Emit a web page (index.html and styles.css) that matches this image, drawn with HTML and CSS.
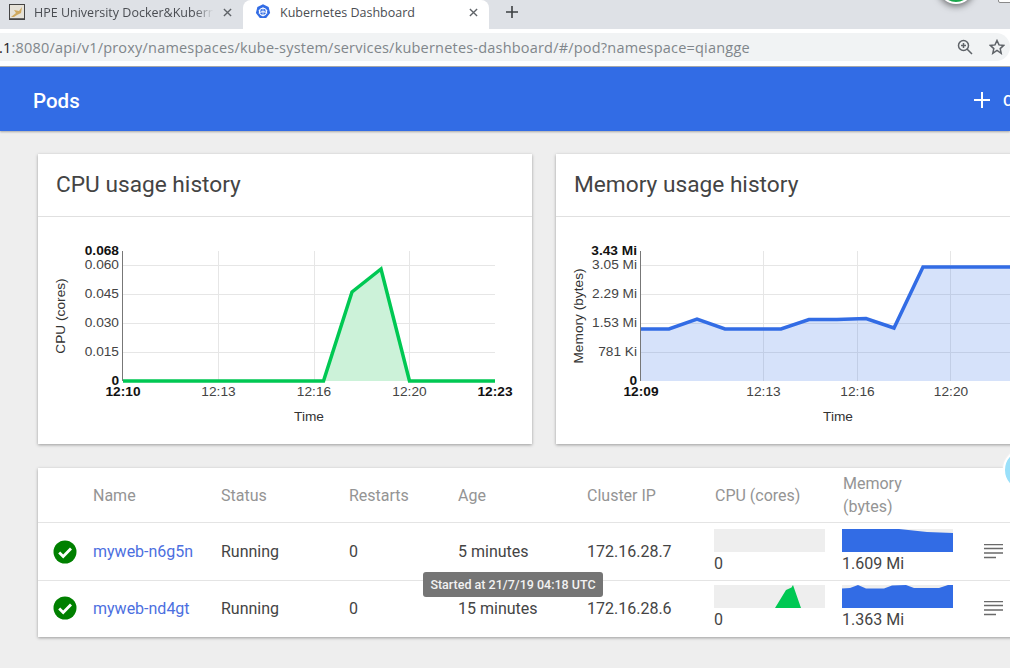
FILE: index.html
```html
<!DOCTYPE html>
<html lang="en">
<head>
<meta charset="utf-8">
<title>Kubernetes Dashboard</title>
<link rel="stylesheet" href="styles.css">
</head>
<body>
<div class="tabstrip">
  <div class="tab">
    <svg class="favicon" viewBox="0 0 16 16"><rect x="0.5" y="0.5" width="15" height="15" fill="#e6e2d8" stroke="#444"/><path d="M2 13 L7 9 L5 6 L10 7 L13 3 L12 9 L8 11 L5 13Z" fill="#cfa95e"/><path d="M1 14h14v1H1z" fill="#666"/></svg>
    <span class="tab-title">HPE University Docker&amp;Kuberne</span>
    <svg class="tab-x" viewBox="0 0 10 10"><path d="M1 1l8 8M9 1l-8 8"/></svg>
  </div>
  <div class="tab tab-active">
    <svg class="favicon" viewBox="0 0 16 16"><path d="M8 0.300l5.600 2.700 1.500 6-3.900 4.900H4.800L0.900 9l1.500-6z" fill="#326ce5"/><circle cx="8" cy="7.800" r="3.600" fill="none" stroke="#fff" stroke-width="1.100"/><path d="M8 3v9.600M3.600 6.500l8.800 2.600M12.400 6.500L3.600 9.100" stroke="#fff" stroke-width="0.700"/></svg>
    <span class="tab-title">Kubernetes Dashboard</span>
    <svg class="tab-x" viewBox="0 0 10 10"><path d="M1 1l8 8M9 1l-8 8"/></svg>
  </div>
  <svg class="tab-plus" viewBox="0 0 12 12"><path d="M6 0v12M0 6h12"/></svg>
</div>
<div class="toolbar">
  <div class="omnibox">
    <span class="url"><b class="url-host">.1</b>:8080/api/v1/proxy/namespaces/kube-system/services/kubernetes-dashboard/#/pod?namespace=qiangge</span>
    <svg class="zoom-icon" viewBox="0 0 16 16"><circle cx="6.500" cy="6.500" r="5" /><path d="M10 10l5 5M4 6.500h5M6.500 4v5"/></svg>
    <svg class="star-icon" viewBox="0 0 16 16"><path d="M8 1.500l2 4.400 4.700.5-3.500 3.200 1 4.700L8 11.400l-4.200 2.900 1-4.700L1.300 6.400l4.700-.5z"/></svg>
  </div>
</div>
<header class="appbar">
  <h1 class="appbar-title">Pods</h1>
  <div class="appbar-action">
    <svg class="plus-icon" viewBox="0 0 16 16"><path d="M8 0v16M0 8h16"/></svg>
    <span class="action-text">CREATE</span>
  </div>
</header>
<main class="content">
  <section class="charts">
    <article class="card">
      <h2 class="card-title">CPU usage history</h2>
      <svg class="chart" viewBox="38 217 494 227">
        <g class="grid">
          <path d="M123 265.500H495M123 294.500H495M123 323.500H495M123 352.500H495M218.500 251V381M314.500 251V381M409.500 251V381"/>
        </g>
        <path class="area-green" d="M123 381H323.500L352 292L381 269L409.500 381Z"/>
        <path class="axis" d="M122.500 251V381"/>
        <polyline class="line-green" points="123,381 323.500,381 352,292 381,269 409.500,381 495,381"/>
        <g class="tick-y">
          <text class="strong" x="119" y="255">0.068</text>
          <text x="119" y="269">0.060</text>
          <text x="119" y="298">0.045</text>
          <text x="119" y="327">0.030</text>
          <text x="119" y="356">0.015</text>
          <text class="strong" x="119" y="385">0</text>
        </g>
        <g class="tick-x">
          <text class="strong" x="123" y="396">12:10</text>
          <text x="218.500" y="396">12:13</text>
          <text x="314" y="396">12:16</text>
          <text x="409.500" y="396">12:20</text>
          <text class="strong" x="495" y="396">12:23</text>
        </g>
        <text class="axis-label" x="309" y="421">Time</text>
        <text class="axis-label" transform="translate(65 316) rotate(-90)">CPU (cores)</text>
      </svg>
    </article>
    <article class="card">
      <h2 class="card-title">Memory usage history</h2>
      <svg class="chart" viewBox="556 217 494 227">
        <g class="grid">
          <path d="M641 265.500H1050M641 294.500H1050M641 323.500H1050M641 352.500H1050M763.500 251V381M857.500 251V381M950.500 251V381"/>
        </g>
        <path class="area-blue" d="M641 381V329H669L697 319L725 329H781L809 319.500H837L866 318.500L894 328L923 267H1050V381Z"/>
        <path class="axis" d="M640.500 251V381"/>
        <polyline class="line-blue" points="641,329 669,329 697,319 725,329 781,329 809,319.500 837,319.500 866,318.500 894,328 923,267 1050,267"/>
        <g class="tick-y">
          <text class="strong" x="637" y="255">3.43 Mi</text>
          <text x="637" y="269">3.05 Mi</text>
          <text x="637" y="298">2.29 Mi</text>
          <text x="637" y="327">1.53 Mi</text>
          <text x="637" y="356">781 Ki</text>
          <text class="strong" x="637" y="385">0</text>
        </g>
        <g class="tick-x">
          <text class="strong" x="641" y="396">12:09</text>
          <text x="763.500" y="396">12:13</text>
          <text x="857.500" y="396">12:16</text>
          <text x="951" y="396">12:20</text>
        </g>
        <text class="axis-label" x="838" y="421">Time</text>
        <text class="axis-label" transform="translate(583 316) rotate(-90)">Memory (bytes)</text>
      </svg>
    </article>
  </section>
  <section class="card table-card">
    <div class="row row-head">
      <span></span>
      <span>Name</span>
      <span>Status</span>
      <span>Restarts</span>
      <span>Age</span>
      <span>Cluster IP</span>
      <span>CPU (cores)</span>
      <span class="wrap">Memory (bytes)</span>
      <span></span>
    </div>
    <div class="row row-first">
      <svg class="check" viewBox="0 0 24 24"><circle cx="12" cy="12" r="11.500"/><path d="M6.200 12.500l4 4 7.800-8"/></svg>
      <a class="pod-link" href="#">myweb-n6g5n</a>
      <span>Running</span>
      <span>0</span>
      <span>5 minutes</span>
      <span>172.16.28.7</span>
      <div class="metric">
        <svg class="spark" viewBox="0 0 111 23" preserveAspectRatio="none"></svg>
        <span>0</span>
      </div>
      <div class="metric">
        <svg class="spark" viewBox="0 0 111 23" preserveAspectRatio="none"><path class="spark-blue" d="M0 0H57L85 3L111 4V23H0Z"/></svg>
        <span>1.609 Mi</span>
      </div>
      <svg class="menu" viewBox="0 0 19 15"><path d="M0 .5h19M0 4.500h19M0 9h19M0 13.500h12"/></svg>
    </div>
    <div class="row row-last">
      <svg class="check" viewBox="0 0 24 24"><circle cx="12" cy="12" r="11.500"/><path d="M6.200 12.500l4 4 7.800-8"/></svg>
      <a class="pod-link" href="#">myweb-nd4gt</a>
      <span>Running</span>
      <span>0</span>
      <span>15 minutes</span>
      <span>172.16.28.6</span>
      <div class="metric">
        <svg class="spark" viewBox="0 0 111 23" preserveAspectRatio="none"><path class="spark-green" d="M61 23L72 5L77.500 2.500L79 0L87 23Z"/></svg>
        <span>0</span>
      </div>
      <div class="metric">
        <svg class="spark" viewBox="0 0 111 23" preserveAspectRatio="none"><path class="spark-blue" d="M0 3.500L8 3L16 0L24 3.500H42L50 .5L64 0L72 3H97L106 0H111V23H0Z"/></svg>
        <span>1.363 Mi</span>
      </div>
      <svg class="menu" viewBox="0 0 19 15"><path d="M0 .5h19M0 4.500h19M0 9h19M0 13.500h12"/></svg>
    </div>
  </section>
</main>
<div class="tooltip">Started at 21/7/19 04:18 UTC</div>
<div class="float-green"></div>
<div class="float-box"></div>
<div class="float-blue"></div>
</body>
</html>
```
FILE: styles.css
```css
* { box-sizing: border-box; }
html, body { margin: 0; padding: 0; width: 1010px; height: 668px; overflow: hidden; }
body { position: relative; background: #eeeeee; font-family: Roboto, "Liberation Sans", sans-serif; color: #212121; }

.tabstrip { height: 29px; background: #dee1e6; display: flex; align-items: flex-start; }
.tab { width: 243px; height: 29px; display: flex; align-items: center; padding: 0 8px 5px 9px; }
.tab-active { width: 246px; background: #fff; border-radius: 8px 8px 0 0; padding: 0 8px 5px 12px; }
.favicon { width: 16px; height: 16px; flex: none; }
.tab-title { flex: 1; margin: 0 6px 0 9px; font: 12.500px "Open Sans", sans-serif; color: #4a4d52; white-space: nowrap; overflow: hidden; -webkit-mask-image: linear-gradient(to right, #000 88%, transparent 98%); mask-image: linear-gradient(to right, #000 88%, transparent 98%); }
.tab-active .tab-title { -webkit-mask-image: none; mask-image: none; }
.tab-x { width: 9px; height: 9px; fill: none; stroke: #5f6368; stroke-width: 1.500; flex: none; margin-right: 3px; }
.tab-plus { width: 12px; height: 12px; margin: 6px 0 0 17px; fill: none; stroke: #3c4043; stroke-width: 1.600; flex: none; }

.toolbar { height: 38px; background: #fff; padding: 4px 0 5px; border-bottom: 1px solid #a9abae; }
.omnibox { height: 28px; background: #f1f3f4; border-radius: 0 14px 14px 0; display: flex; align-items: center; padding-right: 5px; overflow: hidden; }
.url { flex: 1; margin-left: -1px; font: 14.500px "Open Sans", sans-serif; letter-spacing: 0.2px; color: #80868b; white-space: nowrap; overflow: hidden; }
.url-host { font-weight: 400; color: #202124; }
.zoom-icon, .star-icon { width: 16px; height: 16px; fill: none; stroke: #5f6368; stroke-width: 1.500; flex: none; }
.star-icon { margin-left: 16px; }

.appbar { height: 64px; background: #326ce5; display: flex; align-items: center; justify-content: space-between; padding: 4px 0 0 33px; box-shadow: 0 1px 2px rgba(0,0,0,.3); position: relative; }
.appbar-title { margin: 0; font-size: 20.500px; font-weight: 500; color: #fff; }
.appbar-action { width: 36px; flex: none; display: flex; align-items: center; gap: 13px; overflow: hidden; color: #fff; font-weight: 500; font-size: 15px; }
.plus-icon { width: 16px; height: 16px; flex: none; fill: none; stroke: #fff; stroke-width: 2; margin-bottom: 2px; }

.content { padding: 23px 0 0 38px; width: 1100px; }
.charts { display: flex; gap: 24px; }
.card { background: #fff; box-shadow: 0 1px 3px rgba(0,0,0,.35); }
.charts .card { width: 494px; height: 290px; }
.card-title { margin: 0; height: 63px; padding-left: 18px; border-bottom: 1px solid #e0e0e0; font-size: 22.700px; font-weight: 400; line-height: 61px; color: #444; }
.chart { display: block; width: 494px; height: 227px; }

.grid path { stroke: #e6e6e6; stroke-width: 1; fill: none; }
.axis { stroke: #777; stroke-width: 1; fill: none; }
.area-green { fill: #ccf2d9; }
.line-green { fill: none; stroke: #00c853; stroke-width: 3.500; stroke-linejoin: miter; }
.area-blue { fill: #326ce5; fill-opacity: .2; }
.line-blue { fill: none; stroke: #326ce5; stroke-width: 3.500; }
.tick-y text, .tick-x text, .axis-label { font-family: "Liberation Sans", Arial, sans-serif; font-size: 13.700px; fill: #444; }
.tick-y text { text-anchor: end; }
.tick-x text { text-anchor: middle; }
.tick-y .strong, .tick-x .strong { font-weight: 700; fill: #111; }
.axis-label { text-anchor: middle; fill: #333; }

.table-card { margin-top: 24px; width: 1060px; height: 169px; }
.row { display: grid; grid-template-columns: 55px 128px 128px 109px 129px 128px 128px 128px 40px; align-items: center; font-size: 16px; color: #444; border-top: 1px solid #e4e4e4; }
.row-head { height: 54px; border-top: 0; color: #949494; }
.row-first { height: 58px; }
.row-last { height: 57px; padding-bottom: 2px; }
.wrap { display: block; width: 90px; line-height: 23px; }
.check { width: 24px; height: 24px; margin-left: 15px; }
.check circle { fill: #008000; }
.check path { fill: none; stroke: #fff; stroke-width: 2.800; }
.pod-link { color: #4c6fe0; text-decoration: none; }
.metric { display: flex; flex-direction: column; gap: 3px; margin: 0 0 2px -1px; width: 111px; }
.metric span { line-height: 18px; }
.spark { display: block; width: 111px; height: 23px; background: #eeeeee; }
.spark-blue { fill: #326ce5; }
.spark-green { fill: #00c853; }
.menu { width: 19px; height: 15px; margin-left: 13px; fill: none; stroke: #6a6a6a; stroke-width: 1.700; }

.tooltip { position: absolute; left: 423px; top: 572px; width: 180px; height: 25px; background: #757575; border-radius: 3px; color: #f2f2f2; font-size: 12.500px; font-weight: 500; line-height: 25px; text-align: center; }
.float-green { position: absolute; left: 938px; top: -32px; width: 36px; height: 36px; border-radius: 50%; background: #1aa64b; border: 2px solid #fff; box-shadow: 0 2px 7px rgba(0,0,0,.55); }
.float-box { position: absolute; left: 998px; top: -8px; width: 20px; height: 11px; border: 1px solid #8a8a8a; border-radius: 2px; background: #fff; }
.float-blue { position: absolute; left: 1003px; top: 448px; width: 44px; height: 44px; border-radius: 50%; background: #9ae0fa; border: 2px solid #fff; box-shadow: 0 0 2px rgba(255,255,255,.8); }
```
